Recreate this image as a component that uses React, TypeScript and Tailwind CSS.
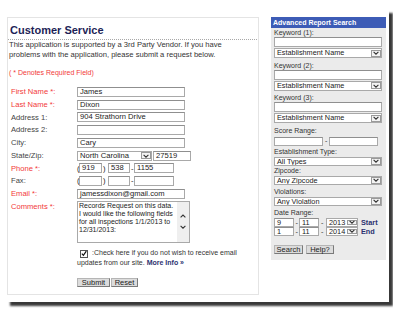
import type { ReactNode } from "react";

const FONT = { fontFamily: '"Liberation Sans", Arial, sans-serif' };

function Chevron({ up = false }: { up?: boolean }) {
  return (
    <svg width="6" height="4" viewBox="0 0 6 4" className="block">
      <path
        d={up ? "M0.6 3.4 L3 1 L5.4 3.4" : "M0.6 0.8 L3 3.2 L5.4 0.8"}
        fill="none"
        stroke="#333"
        strokeWidth="1.1"
      />
    </svg>
  );
}

function Field({ className, children }: { className: string; children?: ReactNode }) {
  return (
    <div
      className={
        "shrink-0 overflow-hidden whitespace-nowrap border border-[#a9a9a9] border-t-[#8f8f8f] bg-white px-[2px] text-[#222] " +
        className
      }
    >
      {children}
    </div>
  );
}

function Select({ className, children }: { className: string; children?: ReactNode }) {
  return (
    <div className={"flex shrink-0 border border-[#a9a9a9] bg-white text-[#222] " + className}>
      <div className="min-w-0 flex-1 overflow-hidden whitespace-nowrap px-[2px]">{children}</div>
      <div className="my-[0.5px] mr-[0.5px] flex w-[10px] items-center justify-center border border-[#9a9a9a] bg-[#f3f3f3]">
        <Chevron />
      </div>
    </div>
  );
}

function Btn({ className, children }: { className: string; children: ReactNode }) {
  return (
    <div
      className={
        "flex items-center justify-center border border-[#7a7a7a] border-t-[#b5b5b5] border-l-[#b5b5b5] bg-[#dcdcdc] text-[7.5px] text-[#222] " +
        className
      }
    >
      {children}
    </div>
  );
}

const ROWS: { label: string; req: boolean; value?: string }[] = [
  { label: "First Name *:", req: true, value: "James" },
  { label: "Last Name *:", req: true, value: "Dixon" },
  { label: "Address 1:", req: false, value: "904 Strathorn Drive" },
  { label: "Address 2:", req: false, value: "" },
  { label: "City:", req: false, value: "Cary" },
];

function Label({ req, children }: { req: boolean; children: ReactNode }) {
  return (
    <div className={"w-[66px] shrink-0 text-[7.6px] " + (req ? "text-[#f23a3a]" : "text-[#444]")}>{children}</div>
  );
}

function PhoneRow({ a, b, c }: { a: string; b: string; c: string }) {
  return (
    <div className="flex items-center text-[7.6px] text-[#222]">
      <span className="w-[2px]">(</span>
      <Field className="h-[10px] w-[23px] leading-[8px]">{a}</Field>
      <span className="w-[6px] pl-[1px]">)</span>
      <Field className="h-[10px] w-[22px] leading-[8px]">{b}</Field>
      <span className="w-[4px] pl-[1px]">-</span>
      <Field className="h-[10px] w-[40px] leading-[8px]">{c}</Field>
    </div>
  );
}

function SideLabel({ className, children }: { className?: string; children: ReactNode }) {
  return <div className={"h-[9px] text-[7px] leading-[9px] text-[#333] " + (className ?? "")}>{children}</div>;
}

function DateRow({ d1, d2, y, tag }: { d1: string; d2: string; y: string; tag: string }) {
  return (
    <div className="flex h-[8.5px] items-center text-[7.3px] leading-[7px]">
      <Field className="h-[8.5px] w-[20px]">{d1}</Field>
      <span className="w-[5px] pl-[1.5px] text-[#333]">-</span>
      <Field className="h-[8.5px] w-[20px]">{d2}</Field>
      <span className="w-[7px] pl-[2px] text-[#333]">-</span>
      <Select className="h-[8.5px] w-[32px]">{y}</Select>
      <span className="pl-[3px] font-bold text-[#2b3270]">{tag}</span>
    </div>
  );
}

export default function App() {
  return (
    <div style={FONT} className="h-[311px] w-[393px] overflow-hidden bg-white pl-[6px] pt-[9px]">
      <div className="flex h-[293px] w-[383px] gap-[12px] bg-white pl-[1px] pt-[8px] shadow-[4px_4px_2px_rgba(0,0,0,0.78)]">
        {/* Left: customer service form */}
        <div className="h-[278px] w-[252px] border border-[#e4e4e4]">
          <h1 className="mt-[6px] pl-[2px] text-[11px] font-bold leading-[12px] text-[#1d1f57]">Customer Service</h1>
          <div className="mr-[1px] mt-[3px] border-b border-dotted border-[#a8a8a8]" />
          <p className="whitespace-nowrap pl-[1px] text-[7.6px] leading-[9.5px] text-[#333]">
            This application is supported by a 3rd Party Vendor. If you have
            <br />
            problems with the application, please submit a request below.
          </p>
          <div className="mt-[8.5px] pl-[1px] text-[7px] leading-[9px] text-[#f23a3a]">( * Denotes Required Field)</div>

          <div className="mt-[9px] pl-[3px]">
            {ROWS.map((r) => (
              <div key={r.label} className="flex h-[12.75px] items-center">
                <Label req={r.req}>{r.label}</Label>
                <Field className="h-[10px] w-[108px] text-[7.6px] leading-[8px]">{r.value}</Field>
              </div>
            ))}
            <div className="flex h-[12.75px] items-center">
              <Label req={false}>State/Zip:</Label>
              <Select className="h-[10px] w-[75px] text-[7.6px] leading-[8px]">North Carolina</Select>
              <Field className="ml-[1px] h-[10px] w-[38px] text-[7.6px] leading-[8px]">27519</Field>
            </div>
            <div className="flex h-[12.75px] items-center">
              <Label req={true}>Phone *:</Label>
              <PhoneRow a="919" b="538" c="1155" />
            </div>
            <div className="flex h-[12.75px] items-center">
              <Label req={false}>Fax:</Label>
              <PhoneRow a="" b="" c="" />
            </div>
            <div className="flex h-[12.75px] items-center">
              <Label req={true}>Email *:</Label>
              <Field className="h-[10px] w-[108px] text-[7.6px] leading-[8px]">jamessdixon@gmail.com</Field>
            </div>
            <div className="flex items-start pt-[0.5px]">
              <Label req={true}>
                <span className="leading-[9.5px]">Comments *:</span>
              </Label>
              <div className="flex h-[42px] w-[113px] border border-[#a9a9a9] bg-white">
                <div className="flex-1 whitespace-nowrap pl-[1px] text-[7px] leading-[8px] text-[#222]">
                  Records Request on this data.
                  <br />I would like the following fields
                  <br />
                  for all inspections 1/1/2013 to
                  <br />
                  12/31/2013:
                </div>
                <div className="flex w-[12px] flex-col items-center justify-center gap-[7px] bg-[#efefef]">
                  <Chevron up />
                  <Chevron />
                </div>
              </div>
            </div>
          </div>

          <div className="ml-[69px] mt-[5px] whitespace-nowrap text-[7px] leading-[10px] text-[#333]">
            <span className="relative top-[1px] ml-[3px] mr-[4px] inline-flex h-[8px] w-[8px] items-center justify-center border border-[#555] bg-white align-middle">
              <svg width="7" height="7" viewBox="0 0 7 7" className="block">
                <path d="M1 3.6 L2.8 5.6 L6.2 0.8" fill="none" stroke="#111" strokeWidth="1.4" />
              </svg>
            </span>
            :Check here if you do not wish to receive email
            <br />
            updates from our site. <span className="font-bold text-[#2b3270]">More Info »</span>
          </div>

          <div className="ml-[69px] mt-[10px] flex gap-[1px]">
            <Btn className="h-[9.5px] w-[33px]">Submit</Btn>
            <Btn className="h-[9.5px] w-[27px]">Reset</Btn>
          </div>
        </div>

        {/* Right: advanced search */}
        <div className="h-[243px] w-[115px] bg-[#ebebeb]">
          <div className="h-[11px] bg-[#3d5cb6] pl-[2px] text-[7px] font-bold leading-[11px] text-white">
            Advanced Report Search
          </div>
          <div className="pl-[3px] pr-[4px]">
            <SideLabel>Keyword (1):</SideLabel>
            <Field className="h-[10px] w-[108px]" />
            <Select className="mt-[1px] h-[10px] w-[108px] text-[7.3px] leading-[8px]">Establishment Name</Select>

            <SideLabel className="mt-[2.5px]">Keyword (2):</SideLabel>
            <Field className="h-[10px] w-[108px]" />
            <Select className="mt-[1px] h-[10px] w-[108px] text-[7.3px] leading-[8px]">Establishment Name</Select>

            <SideLabel className="mt-[2.5px]">Keyword (3):</SideLabel>
            <Field className="h-[10px] w-[108px]" />
            <Select className="mt-[1px] h-[10px] w-[108px] text-[7.3px] leading-[8px]">Establishment Name</Select>

            <SideLabel className="mt-[3px]">Score Range:</SideLabel>
            <div className="mt-[1px] flex items-center text-[7px] text-[#333]">
              <Field className="h-[9.5px] w-[49px]" />
              <span className="w-[6px] pl-[2px]">-</span>
              <Field className="h-[9.5px] w-[49px]" />
            </div>

            <SideLabel>Establishment Type:</SideLabel>
            <Select className="mt-[1px] h-[9.5px] w-[108px] text-[7.3px] leading-[7.5px]">All Types</Select>

            <SideLabel>Zipcode:</SideLabel>
            <Select className="mt-[0.5px] h-[9.5px] w-[108px] text-[7.3px] leading-[7.5px]">Any Zipcode</Select>

            <SideLabel className="mt-[2px]">Violations:</SideLabel>
            <Select className="mt-[0.5px] h-[9.5px] w-[108px] text-[7.3px] leading-[7.5px]">Any Violation</Select>

            <SideLabel className="mt-[2px]">Date Range:</SideLabel>
            <div className="mt-[1px] flex flex-col gap-[0.5px]">
              <DateRow d1="9" d2="11" y="2013" tag="Start" />
              <DateRow d1="1" d2="11" y="2014" tag="End" />
            </div>

            <div className="mt-[9.5px] flex gap-[3px]">
              <Btn className="h-[9px] w-[29px]">Search</Btn>
              <Btn className="h-[9px] w-[28px]">Help?</Btn>
            </div>
          </div>
        </div>
      </div>
    </div>
  );
}
